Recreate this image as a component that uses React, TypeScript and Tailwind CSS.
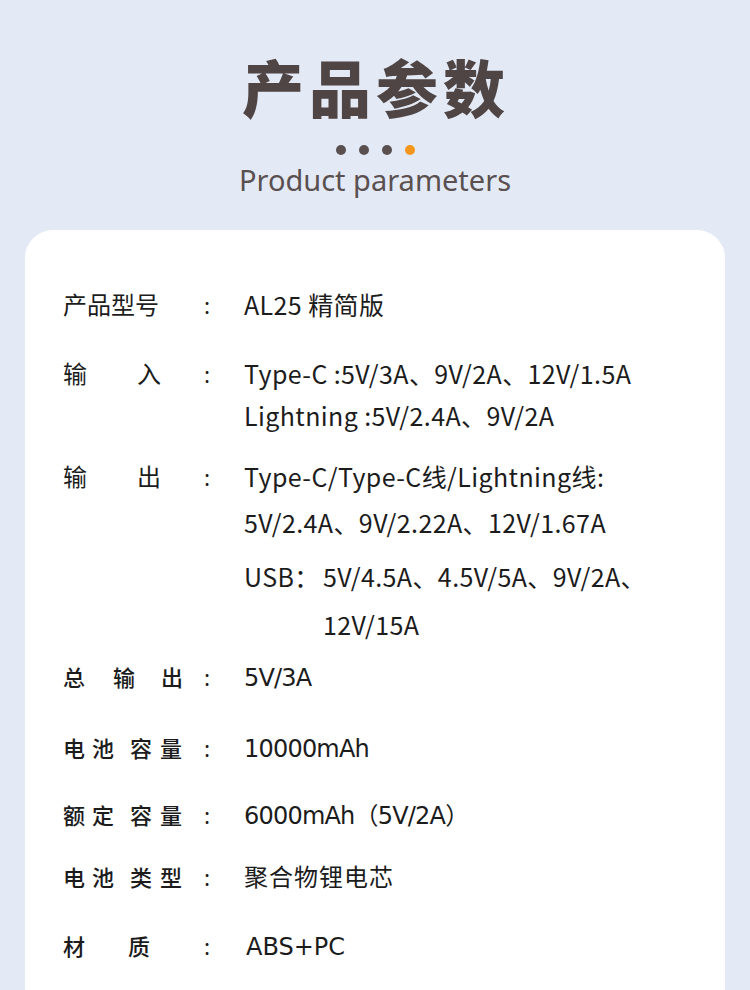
const cjk = "font-['Noto_Sans_CJK_SC',sans-serif]";
const wide = "font-['DejaVu_Sans','Noto_Sans_CJK_SC',sans-serif]";

type Row = {
  label: [string, string][];
  lines: React.ReactNode[];
  gaps?: number[];
  mt: string;
  upper?: boolean;
};

const rows: Row[] = [
  {
    label: [["产品型号", ""]],
    lines: [<span>AL25 精简版</span>],
    mt: "mt-0",
    upper: true,
  },
  {
    label: [["输", ""], ["入", "ml-[50px]"]],
    lines: [
      <span>Type-C :5V/3A、9V/2A、12V/1.5A</span>,
      <span>Lightning :5V/2.4A、9V/2A</span>,
    ],
    gaps: [0, 10],
    mt: "mt-[37px]",
    upper: true,
  },
  {
    label: [["输", ""], ["出", "ml-[50px]"]],
    lines: [
      <span>Type-C/Type-C线/Lightning线:</span>,
      <span>5V/2.4A、9V/2.22A、12V/1.67A</span>,
      <div className="flex">
        <span className="w-[79px]">USB：</span>
        <span>5V/4.5A、4.5V/5A、9V/2A、</span>
      </div>,
      <span className="pl-[79px]">12V/15A</span>,
    ],
    gaps: [0, 14, 22, 16],
    mt: "mt-[29px]",
    upper: true,
  },
  {
    label: [["总", ""], ["输", "ml-[28px]"], ["出", "ml-[26px]"]],
    lines: [<span>5V/3A</span>],
    mt: "mt-[20px]",
  },
  {
    label: [["电", ""], ["池", "ml-[7px]"], ["容", "ml-[16px]"], ["量", "ml-[8px]"]],
    lines: [<span>10000mAh</span>],
    mt: "mt-[37px]",
  },
  {
    label: [["额", ""], ["定", "ml-[7px]"], ["容", "ml-[16px]"], ["量", "ml-[8px]"]],
    lines: [<span>6000mAh（5V/2A）</span>],
    mt: "mt-[33px]",
  },
  {
    label: [["电", ""], ["池", "ml-[7px]"], ["类", "ml-[16px]"], ["型", "ml-[8px]"]],
    lines: [<span className="tracking-[1px]">聚合物锂电芯</span>],
    mt: "mt-[28px]",
  },
  {
    label: [["材", ""], ["质", "ml-[43px]"]],
    lines: [<span className="pl-[2px] tracking-[0px]">ABS+PC</span>],
    mt: "mt-[35px]",
  },
];

export default function App() {
  return (
    <div className="w-[750px] h-[990px] overflow-hidden bg-[#e3eaf6]">
      <div className="flex flex-col items-center pt-[48px]">
        <h1 className="font-['Noto_Sans_CJK_SC',sans-serif] font-black text-[62px] leading-[76px] tracking-[5px] text-[#504545] pl-[2px]">
          产品参数
        </h1>
        <div className="flex gap-[13px] mt-[21px]">
          <span className="w-[10px] h-[10px] rounded-full bg-[#5a5050]" />
          <span className="w-[10px] h-[10px] rounded-full bg-[#5a5050]" />
          <span className="w-[10px] h-[10px] rounded-full bg-[#5a5050]" />
          <span className="w-[10px] h-[10px] rounded-full bg-[#f5961c]" />
        </div>
        <p className="font-['Noto_Sans','Open_Sans',sans-serif] text-[29px] leading-[38px] text-[#5a5050] mt-[6px]">
          Product parameters
        </p>
      </div>
      <div className="mx-[25px] mt-[31px] h-[800px] rounded-[28px] bg-white pl-[38px] pt-[58px] text-[#1c1c1c]">
        {rows.map((r, i) => (
          <div
            key={i}
            className={`flex leading-[32px] ${r.upper ? "items-start" : "items-baseline"} ${r.mt}`}
          >
            <div
              className={`${cjk} flex w-[141px] shrink-0 leading-[32px] ${
                r.upper ? "text-[24px]" : "text-[22px] font-medium"
              }`}
            >
              {r.label.map(([c, m], k) => (
                <span key={k} className={m}>
                  {c}
                </span>
              ))}
            </div>
            <span className={`${cjk} w-[40px] shrink-0 text-[22px] leading-[32px]`}>:</span>
            <div
              className={`flex flex-col leading-[32px] ${
                r.upper
                  ? `${cjk} text-[25px] tracking-[0.4px]`
                  : `${wide} text-[24px] tracking-[-0.8px]`
              }`}
            >
              {r.lines.map((l, j) => (
                <div key={j} style={{ marginTop: r.gaps ? r.gaps[j] : 0 }}>
                  {l}
                </div>
              ))}
            </div>
          </div>
        ))}
      </div>
    </div>
  );
}
